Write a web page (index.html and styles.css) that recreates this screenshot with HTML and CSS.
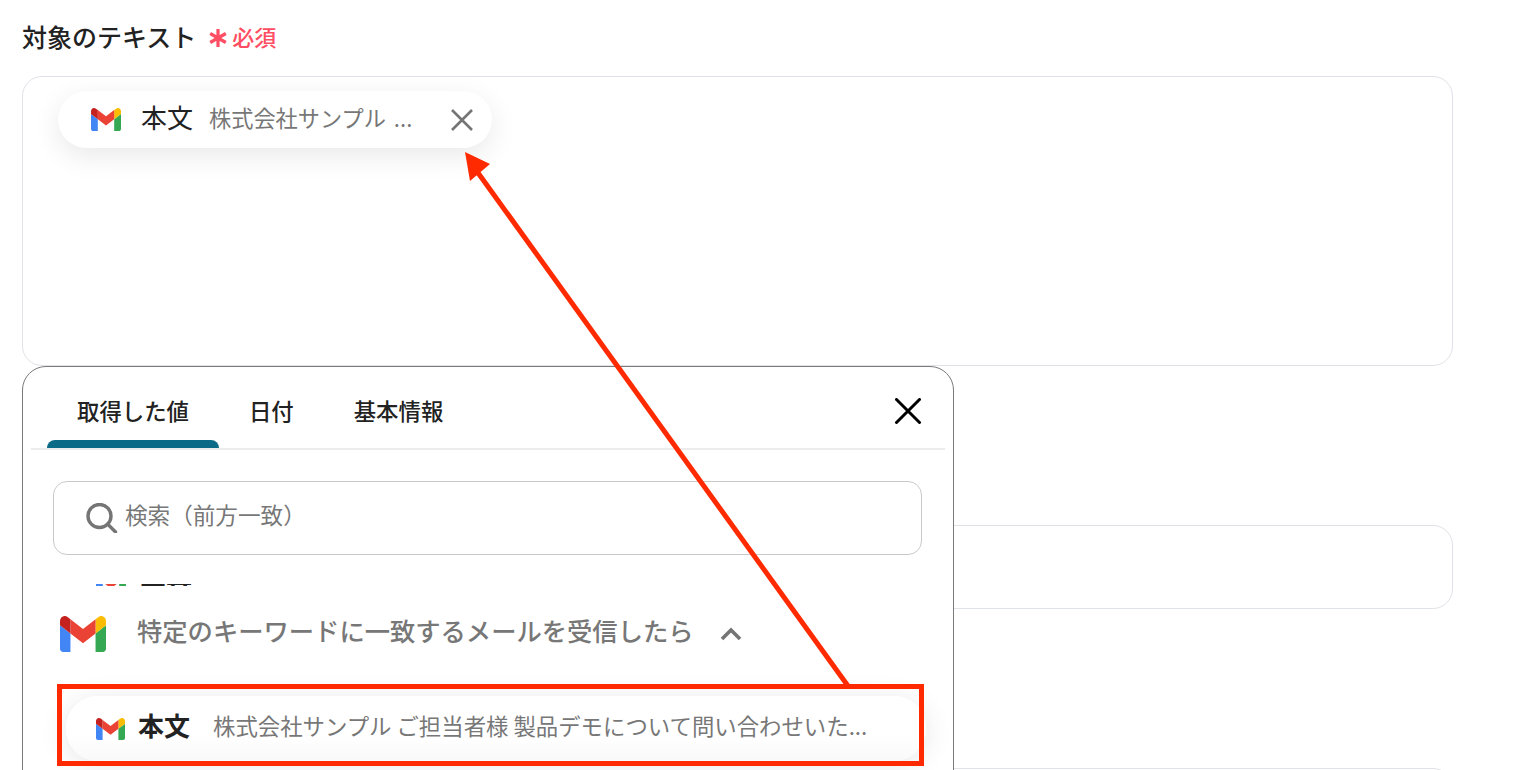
FILE: index.html
```html
<!DOCTYPE html>
<html lang="ja">
  <head>
    <meta charset="UTF-8" />
    <meta name="viewport" content="width=device-width, initial-scale=1.0" />
    <title>対象のテキスト</title>
    <link rel="stylesheet" href="styles.css">
  </head>
  <body>
    <svg class="defs" width="0" height="0">
      <symbol id="gmail" viewBox="52 42 88 66" preserveAspectRatio="none">
        <path fill="#4285f4" d="M58 108h14V74L52 59v43c0 3.32 2.69 6 6 6" />
        <path fill="#34a853" d="M120 108h14c3.32 0 6-2.69 6-6V59l-20 15" />
        <path fill="#fbbc04" d="M120 48v26l20-15v-8c0-7.42-8.47-11.65-14.4-7.2" />
        <path fill="#ea4335" d="M72 74V48l24 18 24-18v26L96 92" />
        <path fill="#c5221f" d="M52 51v8l20 15V48l-5.6-4.2c-5.94-4.45-14.4-.22-14.4 7.2" />
      </symbol>
    </svg>

    <div class="page">
      <div class="field-label">
        <span class="field-name">対象のテキスト</span>
        <span class="required">
          <svg class="required-mark" viewBox="0 0 18 18">
            <path d="M9 0v18M1.2 4.5l15.6 9M16.8 4.5l-15.6 9" />
          </svg>
          <span class="required-text">必須</span>
        </span>
      </div>

      <div class="text-box">
        <div class="chip">
          <svg class="chip-icon"><use href="#gmail" /></svg>
          <span class="chip-name">本文</span>
          <span class="chip-value">株式会社サンプル ...</span>
          <svg class="chip-close" viewBox="0 0 22 22">
            <path d="M1 1l20 20M21 1L1 21" />
          </svg>
        </div>
      </div>

      <div class="box-second"></div>
      <div class="box-third"></div>

      <!-- Popup for picking a value -->
      <div class="popup">
        <div class="tabs">
          <div class="tab active">取得した値</div>
          <div class="tab">日付</div>
          <div class="tab">基本情報</div>
          <svg class="popup-close" viewBox="0 0 26 26">
            <path d="M1.5 1.5l23 23M24.5 1.5l-23 23" />
          </svg>
        </div>

        <div class="popup-body">
          <div class="search">
            <svg class="search-icon" viewBox="0 0 32 30">
              <circle cx="13.5" cy="13" r="11.5" />
              <path d="M21.5 21l8 8" />
            </svg>
            <span class="search-text">検索（前方一致）</span>
          </div>

          <div class="cut-row">
            <svg class="cut-icon"><use href="#gmail" /></svg>
            <span class="cut-text">本文</span>
          </div>

          <div class="group">
            <svg class="group-icon"><use href="#gmail" /></svg>
            <span class="group-name">特定のキーワードに一致するメールを受信したら</span>
            <svg class="group-toggle" viewBox="0 0 22 14">
              <path d="M2 12l9-9 9 9" />
            </svg>
          </div>

          <div class="value-row">
            <svg class="value-icon"><use href="#gmail" /></svg>
            <span class="value-name">本文</span>
            <span class="value-text">株式会社サンプル ご担当者様 製品デモについて問い合わせいた...</span>
          </div>
        </div>
      </div>

      <!-- Annotations drawn over the screenshot -->
      <div class="mark-box"></div>
      <svg class="mark-arrow" viewBox="0 0 1514 770">
        <path class="arrow-line" d="M848 686L476 170" />
        <path class="arrow-head" d="M465 152L490 164L470 181Z" />
      </svg>
    </div>
  </body>
</html>
```

FILE: styles.css
```css
* {
  margin: 0;
  padding: 0;
  box-sizing: border-box;
}

html,
body {
  height: 770px;
  overflow: hidden;
}

body {
  font-family: "Noto Sans CJK JP", "Noto Sans", sans-serif;
  background: white;
  color: #222;
}

.defs {
  position: absolute;
}

.page {
  position: relative;
  height: 770px;
  padding: 0 61px 0 22px;
  overflow: hidden;
}

.field-label {
  display: flex;
  align-items: center;
  height: 76px;
  padding-bottom: 5px;
}

.field-name {
  font-size: 25px;
  font-weight: 500;
}

.required {
  display: flex;
  align-items: center;
  gap: 6px;
  margin-left: 13px;
  margin-top: 4px;
  font-size: 22px;
  font-weight: 500;
  color: #ff4d63;
}

.required-text {
  margin-left: -1px;
  margin-bottom: 3px;
}

.required-mark {
  width: 18px;
  height: 18px;
  fill: none;
  stroke: #ff4d63;
  stroke-width: 3.2;
}

.text-box {
  height: 290px;
  padding: 14px 35px;
  border: 1px solid #dfe2e7;
  border-radius: 20px;
}

.chip {
  display: flex;
  align-items: center;
  width: 434px;
  height: 57px;
  padding-left: 33px;
  background: white;
  border-radius: 29px;
  box-shadow: 0 8px 28px rgba(0, 0, 0, 0.09);
}

.chip-icon {
  flex: none;
  width: 30px;
  height: 23px;
}

.chip-name {
  margin-left: 20px;
  margin-bottom: 6px;
  font-size: 26px;
  white-space: nowrap;
}

.chip-value {
  margin-left: 16px;
  margin-bottom: 6px;
  font-size: 22.2px;
  word-spacing: 3px;
  color: #777;
  white-space: nowrap;
}

.chip-close {
  flex: none;
  width: 22px;
  height: 22px;
  margin-left: auto;
  margin-right: 19px;
  fill: none;
  stroke: #757575;
  stroke-width: 2.6;
}

.box-second {
  height: 84px;
  margin-top: 159px;
  border: 1px solid #dfe2e7;
  border-radius: 20px;
}

.box-third {
  height: 84px;
  margin-top: 159px;
  border: 1px solid #dfe2e7;
  border-radius: 20px;
}

.popup {
  position: absolute;
  top: 366px;
  left: 22px;
  width: 932px;
  height: 440px;
  background: white;
  border: 1px solid #7a7a7a;
  border-radius: 24px;
  overflow: hidden;
}

.tabs {
  position: relative;
  display: flex;
  align-items: flex-start;
  height: 83px;
  margin: 0 8px;
  padding: 27px 0 0 16px;
  border-bottom: 2px solid #ececec;
}

.tab {
  position: relative;
  height: 54px;
  padding: 0 30px;
  font-size: 22.4px;
  line-height: 32px;
  font-weight: 500;
  white-space: nowrap;
}

.tab.active::after {
  content: "";
  position: absolute;
  left: 0;
  right: 0;
  bottom: 0;
  height: 8px;
  background: #0b6a85;
  border-radius: 8px 8px 0 0;
}

.popup-close {
  position: absolute;
  top: 31px;
  right: 24px;
  width: 26px;
  height: 26px;
  fill: none;
  stroke: #000;
  stroke-width: 3;
  stroke-linecap: round;
}

.popup-body {
  padding: 31px 31px 0 30px;
}

.search {
  display: flex;
  align-items: center;
  gap: 7px;
  height: 74px;
  padding-left: 32px;
  color: #777;
  border: 1px solid #c9c9c9;
  border-radius: 14px;
}

.search-text {
  margin-bottom: 8px;
  font-size: 22.6px;
}

.search-icon {
  flex: none;
  width: 32px;
  height: 30px;
  fill: none;
  stroke: #757575;
  stroke-width: 3.4;
  stroke-linecap: round;
}

.cut-row {
  display: flex;
  align-items: flex-start;
  height: 2px;
  margin-top: 29px;
  padding-left: 43px;
  overflow: hidden;
}

.cut-icon {
  flex: none;
  width: 30px;
  height: 23px;
  margin-top: -13px;
}

.cut-text {
  margin-left: 14px;
  margin-top: -8px;
  font-size: 26px;
  line-height: 26px;
  font-weight: 700;
}

.group {
  display: flex;
  align-items: center;
  height: 36px;
  margin-top: 30px;
  padding-left: 7px;
}

.group-icon {
  flex: none;
  width: 46px;
  height: 36px;
}

.group-name {
  margin-left: 31px;
  margin-bottom: 8px;
  font-size: 25.3px;
  font-weight: 500;
  color: #777;
  white-space: nowrap;
}

.group-toggle {
  flex: none;
  width: 22px;
  height: 14px;
  margin-left: 26px;
  margin-top: -1px;
  fill: none;
  stroke: #757575;
  stroke-width: 3.6;
}

.value-row {
  display: flex;
  align-items: center;
  height: 65px;
  margin: 44px -4px 0 13px;
  padding-left: 30px;
  background: linear-gradient(#fff 60%, #f9f9f9);
  border-radius: 32px;
  box-shadow: 0 4px 28px rgba(0, 0, 0, 0.1);
}

.value-icon {
  flex: none;
  width: 29px;
  height: 22px;
}

.value-name {
  margin-left: 13px;
  margin-bottom: 8px;
  font-size: 26px;
  font-weight: 700;
  white-space: nowrap;
}

.value-text {
  margin-left: 23px;
  margin-bottom: 8px;
  font-size: 22.4px;
  color: #777;
  white-space: nowrap;
}

.mark-box {
  position: absolute;
  top: 684px;
  left: 57px;
  width: 867px;
  height: 82px;
  border: 5px solid #ff2a00;
}

.mark-arrow {
  position: absolute;
  top: 0;
  left: 0;
  width: 1514px;
  height: 770px;
  pointer-events: none;
}

.arrow-line {
  fill: none;
  stroke: #ff2a00;
  stroke-width: 5;
}

.arrow-head {
  fill: #ff2a00;
}
```
